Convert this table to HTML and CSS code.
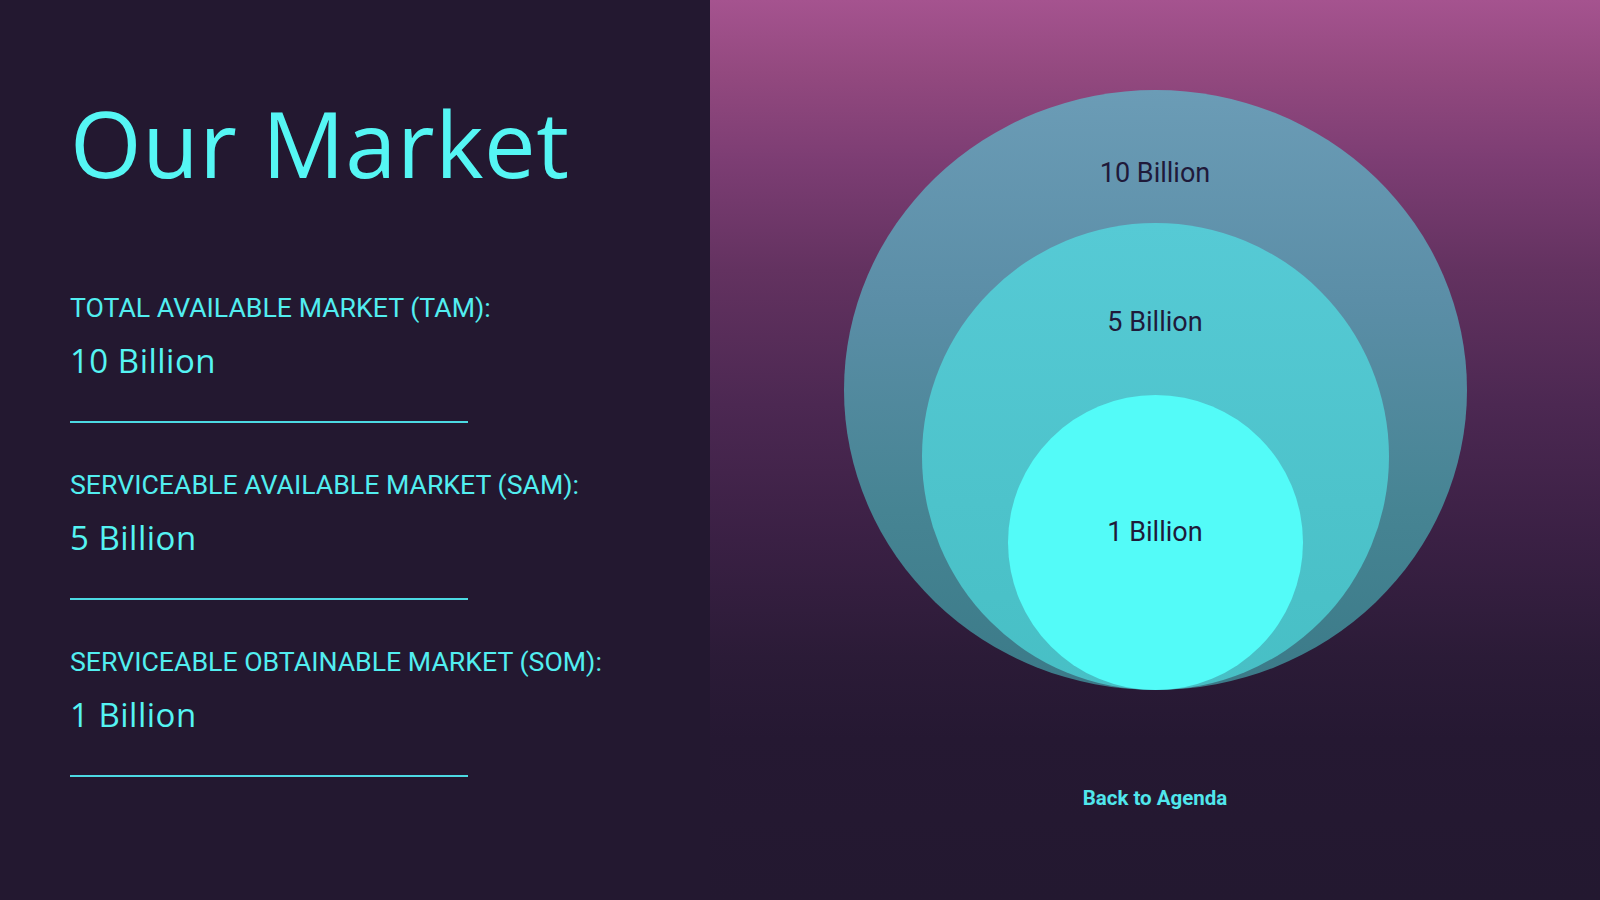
FILE: index.html
```html
<!DOCTYPE html>
<html lang="en">
<head>
<meta charset="utf-8">
<title>Our Market</title>
<link rel="stylesheet" href="styles.css">
</head>
<body>
<main class="slide">
  <section class="info">
    <h1 class="title">Our Market</h1>
    <div class="metric">
      <div class="metric-label">TOTAL AVAILABLE MARKET (TAM):</div>
      <div class="metric-value">10 Billion</div>
      <div class="metric-rule"></div>
    </div>
    <div class="metric">
      <div class="metric-label">SERVICEABLE AVAILABLE MARKET (SAM):</div>
      <div class="metric-value">5 Billion</div>
      <div class="metric-rule"></div>
    </div>
    <div class="metric">
      <div class="metric-label">SERVICEABLE OBTAINABLE MARKET (SOM):</div>
      <div class="metric-value">1 Billion</div>
      <div class="metric-rule"></div>
    </div>
  </section>
  <section class="visual">
    <div class="circles">
      <div class="circle circle-tam"><span class="circle-label">10 Billion</span></div>
      <div class="circle circle-sam"><span class="circle-label">5 Billion</span></div>
      <div class="circle circle-som"><span class="circle-label">1 Billion</span></div>
    </div>
    <a class="back-link" href="#">Back to Agenda</a>
  </section>
</main>
</body>
</html>
```

FILE: styles.css
```css
html, body {
  margin: 0;
  padding: 0;
}

body {
  width: 1600px;
  height: 900px;
  overflow: hidden;
  background: #231830;
}

.slide {
  display: grid;
  grid-template-columns: 710px 890px;
  width: 1600px;
  height: 900px;
}

.info {
  background: #231830;
  padding: 97px 0 0 70px;
  display: flex;
  flex-direction: column;
}

.title {
  margin: 0;
  font-family: "Open Sans", sans-serif;
  font-weight: 400;
  font-size: 92px;
  line-height: 92px;
  color: #55f6f4;
  letter-spacing: 0.6px;
}

.metric {
  display: flex;
  flex-direction: column;
}

.metric:first-of-type {
  margin-top: 106px;
}

.metric + .metric {
  margin-top: 49px;
}

.metric-label {
  font-family: Roboto, sans-serif;
  font-size: 26.7px;
  line-height: 27px;
  color: #52eef0;
}

.metric-value {
  margin-top: 22px;
  font-family: "Open Sans", sans-serif;
  font-size: 33px;
  line-height: 33px;
  letter-spacing: 0.5px;
  color: #55f4f3;
}

.metric-rule {
  margin-top: 44px;
  width: 398px;
  height: 2px;
  background: #4cd9e2;
}

.visual {
  display: flex;
  flex-direction: column;
  align-items: center;
  padding-top: 90px;
  background: linear-gradient(180deg,
    #a5538f 0%,
    #93497f 8%,
    #7c3d73 18%,
    #633260 30%,
    #4c2852 45%,
    #3a2044 60%,
    #2b1b37 73%,
    #251832 82%,
    #231830 100%);
}

.circles {
  display: grid;
  width: 623px;
  height: 600px;
  align-items: end;
  justify-items: center;
}

.circle {
  grid-area: 1 / 1;
  border-radius: 50%;
  display: flex;
  flex-direction: column;
  align-items: center;
  box-sizing: border-box;
}

.circle-tam {
  width: 623px;
  height: 600px;
  padding-top: 70px;
  background: linear-gradient(180deg, #6b9cb6 0%, #5b8ea7 35%, #468493 70%, #3b7a88 100%);
}

.circle-sam {
  width: 467px;
  height: 467px;
  padding-top: 86px;
  background: linear-gradient(180deg, #56cad5 0%, #4dc3cb 60%, #47bfc5 100%);
}

.circle-som {
  width: 295px;
  height: 295px;
  padding-top: 124px;
  background: #53fbf8;
}

.circle-label {
  font-family: Roboto, sans-serif;
  font-size: 27px;
  line-height: 27px;
  color: #1f1a3a;
}

.back-link {
  margin-top: 98px;
  font-family: Roboto, sans-serif;
  font-weight: 700;
  font-size: 20.5px;
  line-height: 20px;
  color: #50e6ec;
  text-decoration: none;
}
```
